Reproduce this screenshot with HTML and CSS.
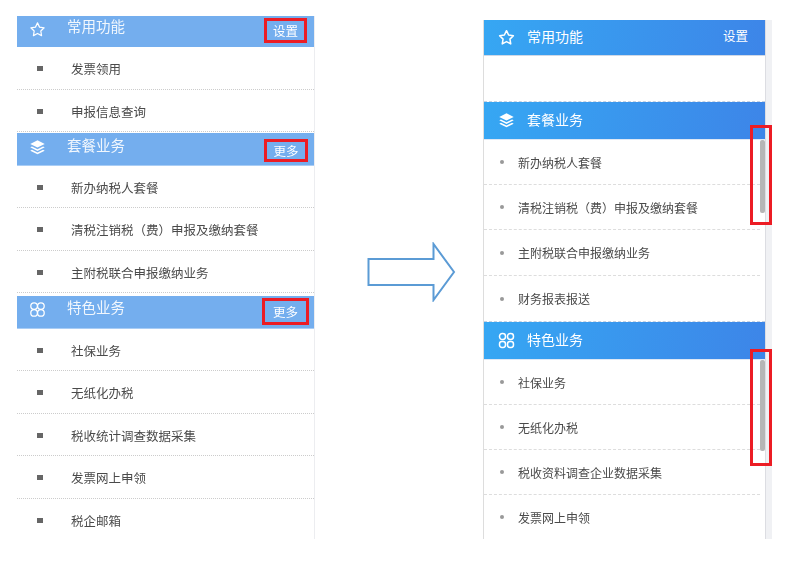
FILE: index.html
```html
<!DOCTYPE html>
<html lang="zh-CN">
<head>
<meta charset="utf-8">
<title>功能菜单</title>
<link rel="stylesheet" href="styles.css">
</head>
<body>
<main class="stage">
  <section class="panel old">
    <div class="head h1">
      <svg class="ico" viewBox="0 0 20 20"><path d="M10 2.200l2.400 5 5.400.8-3.900 3.800.9 5.400-4.800-2.600-4.800 2.600.9-5.400L2.200 8l5.400-.8z" fill="none" stroke="currentColor" stroke-width="1.400" stroke-linejoin="round"/></svg>
      <span class="title">常用功能</span>
      <span class="btn b1">设置</span>
    </div>
    <div class="item i2"><i class="sq"></i>发票领用</div>
    <div class="item"><i class="sq"></i>申报信息查询</div>
    <div class="head h2">
      <svg class="ico" viewBox="0 0 20 20"><path d="M10 1.500l8.500 4.300L10 10.100 1.500 5.800z" fill="currentColor"/><path d="M3.500 8.700L10 12l6.500-3.300 2 1.100L10 14.100 1.500 9.800z" fill="currentColor"/><path d="M3.500 12.600L10 15.900l6.500-3.300 2 1.100L10 18 1.500 13.700z" fill="currentColor"/></svg>
      <span class="title">套餐业务</span>
      <span class="btn b2">更多</span>
    </div>
    <div class="item"><i class="sq"></i>新办纳税人套餐</div>
    <div class="item i2"><i class="sq"></i>清税注销税（费）申报及缴纳套餐</div>
    <div class="item"><i class="sq"></i>主附税联合申报缴纳业务</div>
    <div class="head h3">
      <svg class="ico" viewBox="0 0 20 20"><g fill="none" stroke="currentColor" stroke-width="1.500"><circle cx="6" cy="6" r="3.900"/><circle cx="14" cy="6" r="3.900"/><circle cx="6" cy="14" r="3.900"/><circle cx="14" cy="14" r="3.900"/></g></svg>
      <span class="title">特色业务</span>
      <span class="btn b3">更多</span>
    </div>
    <div class="item"><i class="sq"></i>社保业务</div>
    <div class="item i2"><i class="sq"></i>无纸化办税</div>
    <div class="item"><i class="sq"></i>税收统计调查数据采集</div>
    <div class="item i2"><i class="sq"></i>发票网上申领</div>
    <div class="item last"><i class="sq"></i>税企邮箱</div>
  </section>

  <svg class="arrow" viewBox="0 0 90 60"><path d="M1.500 17H66.500V2L87 30 66.500 58V43H1.500z" fill="#fff" stroke="#5b9bd5" stroke-width="2"/></svg>

  <section class="panel new">
    <div class="nhead">
      <svg class="nico" viewBox="0 0 20 20"><path d="M10 2l2.500 5.100 5.600.8-4.050 4 .95 5.600-5-2.650-5 2.650.95-5.600-4.050-4 5.600-.8z" fill="none" stroke="currentColor" stroke-width="1.800" stroke-linejoin="round"/></svg>
      <span class="ntitle">常用功能</span>
      <span class="nset">设置</span>
    </div>
    <div class="blank"></div>
    <div class="nhead n2">
      <svg class="nico" viewBox="0 0 20 20"><path d="M10 1.500l8.500 4.300L10 10.100 1.500 5.800z" fill="currentColor"/><path d="M3.500 8.700L10 12l6.500-3.300 2 1.100L10 14.100 1.500 9.800z" fill="currentColor"/><path d="M3.500 12.600L10 15.900l6.500-3.300 2 1.100L10 18 1.500 13.700z" fill="currentColor"/></svg>
      <span class="ntitle">套餐业务</span>
    </div>
    <div class="nitem"><i class="dot"></i>新办纳税人套餐</div>
    <div class="nitem"><i class="dot"></i>清税注销税（费）申报及缴纳套餐</div>
    <div class="nitem ntall"><i class="dot"></i>主附税联合申报缴纳业务</div>
    <div class="nitem ntall nwide"><i class="dot"></i>财务报表报送</div>
    <div class="nhead n2">
      <svg class="nico" viewBox="0 0 20 20"><g fill="none" stroke="currentColor" stroke-width="1.800"><rect x="1.800" y="1.800" width="7" height="7" rx="3.200"/><rect x="11.200" y="1.800" width="7" height="7" rx="3.200"/><rect x="1.800" y="11.200" width="7" height="7" rx="2.800"/><rect x="11.200" y="11.200" width="7" height="7" rx="2.800"/></g></svg>
      <span class="ntitle">特色业务</span>
    </div>
    <div class="nitem"><i class="dot"></i>社保业务</div>
    <div class="nitem"><i class="dot"></i>无纸化办税</div>
    <div class="nitem"><i class="dot"></i>税收资料调查企业数据采集</div>
    <div class="nitem"><i class="dot"></i>发票网上申领</div>

    <div class="thumb t1"></div>
    <div class="thumb t2"></div>
    <div class="mark m1"></div>
    <div class="mark m2"></div>
  </section>
</main>
</body>
</html>
```

FILE: styles.css
```css
* { box-sizing: border-box; }
html, body { margin: 0; padding: 0; background: #fff; }
body {
  width: 787px;
  height: 566px;
  overflow: hidden;
  font-family: "Noto Sans CJK SC", "Liberation Sans", sans-serif;
}
.stage {
  display: flex;
  align-items: flex-start;
  padding: 16px 0 0 17px;
}

/* left, older panel */
.old {
  width: 298px;
  height: 523px;
  overflow: hidden;
  border-right: 1px solid #ecedf0;
  flex: none;
  filter: blur(.35px);
}
.head {
  display: flex;
  align-items: center;
  background: #74aeee;
  color: #fff;
  padding: 0 7px 0 12px;
  font-size: 14.5px;
}
.h1 { height: 31px; }
.h2 { height: 33px; margin-top: 1px; border-bottom: 1px solid #a9cdf5; }
.h3 { height: 33px; margin-top: 3px; border-bottom: 1px solid #a9cdf5; }
.ico { width: 17px; height: 17px; flex: none; margin-bottom: 4px; }
.title { margin-left: 21px; flex: 1; line-height: 18px; margin-bottom: 8px; opacity: .9; }
.h1 .title { margin-bottom: 11px; }
.h3 .title { margin-bottom: 10px; }
.h3 .ico { margin-bottom: 5px; }
.btn {
  display: flex;
  align-items: center;
  justify-content: center;
  font-size: 12.5px;
  border: 3px solid #ec1c24;
  color: #fff;
}
.b1 { width: 43px; height: 25px; margin-bottom: 2px; line-height: 15px; }
.b2 { width: 44px; height: 23px; margin-top: 3px; margin-right: -1px; }
.b3 { width: 47px; height: 27px; margin-bottom: 2px; margin-right: -2px; }
.item {
  display: flex;
  align-items: center;
  height: 42px;
  padding: 1px 0 0 20px;
  font-size: 12.5px;
  color: #4a4a4a;
  border-bottom: 1px dotted #ccc;
}
.i2 { height: 43px; }
.last { border-bottom: 0; }
.sq { width: 6px; height: 5px; background: #666; margin-right: 28px; flex: none; }

/* arrow */
.arrow {
  width: 90px;
  height: 60px;
  flex: none;
  margin: 226px 0 0 52px;
}

/* right, new panel */
.new {
  position: relative;
  width: 289px;
  height: 519px;
  flex: none;
  margin: 4px 0 0 26px;
  border-left: 1px solid #ddd;
  background: linear-gradient(to right, transparent 281px, #dcdde2 281px, #dcdde2 282px, #f0f1f4 282px);
  overflow: hidden;
  filter: blur(.3px);
}
.nhead {
  display: flex;
  align-items: center;
  width: 281px;
  height: 36px;
  padding-left: 14px;
  color: #fff;
  background: linear-gradient(100deg, #36a7f3, #3d85e8);
  font-size: 14px;
  border-bottom: 1px solid #cfd8e6;
}
.n2 { height: 38px; border-bottom: 1px solid #dfe8f5; }
.nico { width: 17px; height: 17px; flex: none; }
.ntitle { margin-left: 12px; flex: 1; margin-bottom: 4px; }
.nset { font-size: 12.5px; margin-right: 17px; margin-bottom: 4px; }
.blank { width: 281px; height: 46px; border-bottom: 1px dashed #c6d2e2; background: #fff; }
.nitem {
  display: flex;
  align-items: center;
  height: 45px;
  width: 276px;
  font-size: 12px;
  color: #4a4a4a;
  padding-left: 16px;
  background: #fff;
  border-bottom: 1px dashed #ddd;
}
.ntall { height: 46px; }
.nwide { width: 281px; border-bottom-color: #c6d2e2; }
.dot { width: 4px; height: 4px; border-radius: 50%; background: #999; margin-right: 14px; flex: none; }
.thumb {
  position: absolute;
  left: 276px;
  width: 5px;
  background: #b6b6b6;
  border-radius: 2px;
}
.t1 { top: 120px; height: 73px; }
.t2 { top: 340px; height: 91px; }
.mark {
  position: absolute;
  left: 266px;
  width: 22px;
  border: 3px solid #ec1c24;
}
.m1 { top: 105px; height: 100px; }
.m2 { top: 329px; height: 117px; }
```
